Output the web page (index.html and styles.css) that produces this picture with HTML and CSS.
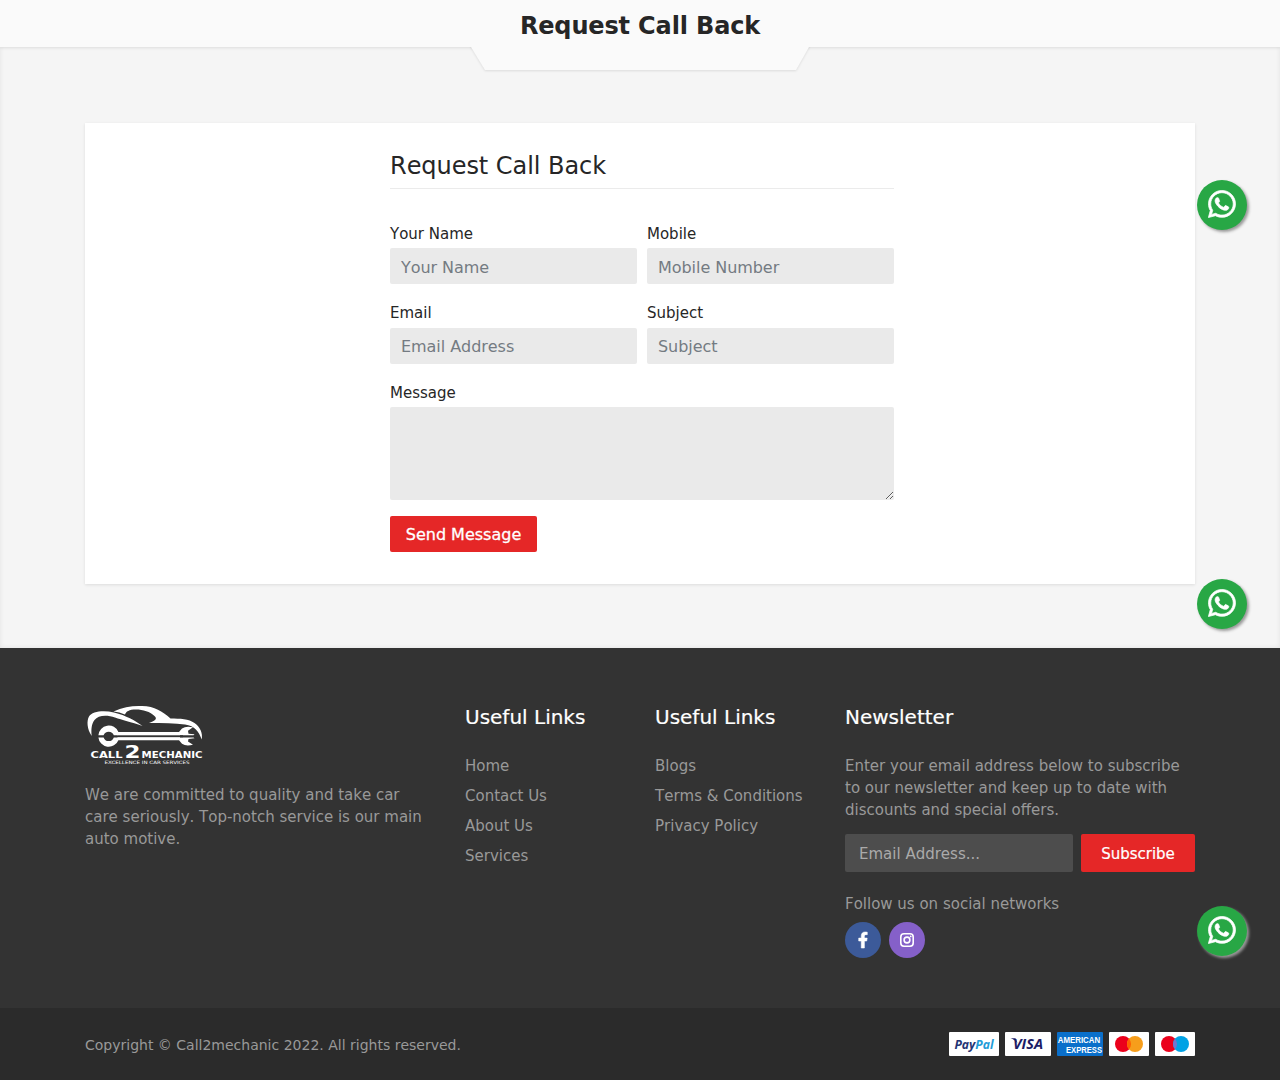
FILE: index.html
```html
<!DOCTYPE html>
<html lang="en">
<head>
<meta charset="utf-8">
<title>Request Call Back</title>
<link rel="stylesheet" href="styles.css">
</head>
<body>
<svg class="sprite" aria-hidden="true">
  <symbol id="whatsapp" viewBox="-5 25 460 462"><path d="M380.9 97.1C339 55.1 283.2 32 223.9 32c-122.4 0-222 99.6-222 222 0 39.1 10.2 77.3 29.6 111L0 480l117.7-30.9c32.4 17.7 68.9 27 106.1 27h.1c122.3 0 224.1-99.6 224.1-222 0-59.3-25.2-115-67.1-157zm-157 341.6c-33.2 0-65.7-8.9-94-25.7l-6.7-4-69.8 18.3L72 359.2l-4.4-7c-18.5-29.4-28.2-63.3-28.2-98.2 0-101.7 82.8-184.5 184.6-184.5 49.3 0 95.6 19.2 130.4 54.1 34.8 34.9 56.2 81.2 56.1 130.5 0 101.8-84.9 184.6-186.6 184.6zm101.2-138.2c-5.5-2.8-32.8-16.2-37.9-18-5.1-1.9-8.8-2.8-12.5 2.8-3.7 5.6-14.3 18-17.6 21.8-3.2 3.7-6.5 4.2-12 1.4-32.6-16.3-54-29.1-75.500-66-5.700-9.800 5.700-9.100 16.300-30.300 1.800-3.700.9-6.900-.5-9.700-1.400-2.800-12.500-30.100-17.100-41.200-4.500-10.800-9.100-9.300-12.500-9.500-3.200-.2-6.900-.2-10.600-.2-3.700 0-9.700 1.400-14.800 6.900-5.100 5.600-19.400 19-19.400 46.300 0 27.300 19.900 53.700 22.600 57.400 2.800 3.700 39.100 59.700 94.800 83.800 35.200 15.200 49 16.500 66.600 13.900 10.700-1.600 32.800-13.400 37.400-26.400 4.600-13 4.600-24.100 3.200-26.400-1.300-2.500-5-3.900-10.500-6.600z"/></symbol>
</svg>

<section class="request">
  <header class="page-title">
    <svg class="title-tab" width="350" height="35" viewBox="0 0 350 35" aria-hidden="true"><path d="M6 0h338v5l-13 23H20L6 5z"/></svg>
    <h1>Request Call Back</h1>
  </header>
  <main class="card">
    <form class="form">
      <h2>Request Call Back</h2>
      <div class="fields">
        <label>Your Name<input type="text" placeholder="Your Name"></label>
        <label>Mobile<input type="text" placeholder="Mobile Number"></label>
        <label>Email<input type="email" placeholder="Email Address"></label>
        <label>Subject<input type="text" placeholder="Subject"></label>
        <label class="wide">Message<textarea></textarea></label>
      </div>
      <button class="send" type="button">Send Message</button>
    </form>
  </main>
</section>

<footer>
  <div class="footer-main">
    <div class="about">
      <svg class="logo" width="120" height="62" viewBox="0 0 120 62" role="img" aria-label="Call 2 Mechanic">
        <g fill="#fff">
          <path d="M6.700 32C2 25 1.500 17 4 12.500C7 7.500 18 6 29 8.500C41 11.500 50 16.500 57.500 22C46 18 37 16 30 13.500C22 10.500 13 11 9.500 16C6.500 20 6 25 6.700 32z"/>
          <path d="M28.500 7.500C38 3 48 1.500 57 2C70 2.500 77 7 85.500 14.500C95 14.500 104 15 109.500 19C115 23 118 29 116.700 35.500C113.500 27 110 22 100 20.500C90 19 78 19 64 19C69.500 17 72.500 15 70 12.500C65 7.500 58 5.500 51 5.500C44 5.500 41 7.500 40 10.500C36 8.800 33 8 28.500 7.500z"/>
          <path d="M13.400 31.200a10.400 10.400 0 0 1 20-3.200H94l3-3.500q4-3 11-1.200l-5 3.500 .5 3 6 .5-1 1H28.800a5.400 5.400 0 0 0-10.200 0z"/>
          <path d="M13.400 33.400a10.400 10.400 0 0 0 20 2.800H94l3 3.500q4 3 11 1l-5-3.200.5-2.500 6-.8-1-.8H28.800a5.400 5.400 0 0 1-10.200 0z"/>
          <path d="M33 31.200H98v2H33z" fill="#333"/>
          <path d="M32.500 30.300H95v.9H32.500zM32.500 33.200H95v.9H32.500z"/>
        </g>
        <g class="logo-name">
          <text x="5.500" y="53.500" textLength="32" lengthAdjust="spacingAndGlyphs">CALL</text>
          <text class="logo-two" x="39.500" y="53.500" textLength="16" lengthAdjust="spacingAndGlyphs">2</text>
          <text x="56.500" y="53.500" textLength="61" lengthAdjust="spacingAndGlyphs">MECHANIC</text>
          <text class="logo-motto" x="19.500" y="60" textLength="85" lengthAdjust="spacingAndGlyphs">EXCELLENCE IN CAR SERVICES</text>
        </g>
      </svg>
      <p>We are committed to quality and take car<br>care seriously. Top-notch service is our main<br>auto motive.</p>
    </div>
    <nav>
      <h3>Useful Links</h3>
      <ul><li>Home</li><li>Contact Us</li><li>About Us</li><li>Services</li></ul>
    </nav>
    <nav>
      <h3>Useful Links</h3>
      <ul><li>Blogs</li><li>Terms &amp; Conditions</li><li>Privacy Policy</li></ul>
    </nav>
    <div class="newsletter">
      <h3>Newsletter</h3>
      <p>Enter your email address below to subscribe<br>to our newsletter and keep up to date with<br>discounts and special offers.</p>
      <form class="subscribe"><input type="email" placeholder="Email Address..."><button type="button">Subscribe</button></form>
      <p>Follow us on social networks</p>
      <div class="social">
        <a class="facebook"><svg width="10" height="16" viewBox="0 0 320 512"><path d="M279.140 288l14.220-92.660h-88.910v-60.130c0-25.350 12.420-50.060 52.240-50.060h40.420V6.260S260.430 0 225.360 0c-73.220 0-121.080 44.380-121.080 124.720v70.620H22.890V288h81.390v224h100.170V288z"/></svg></a>
        <a class="instagram"><svg width="14" height="14" viewBox="0 0 14 14"><rect x=".8" y=".8" width="12.400" height="12.400" rx="3.200"/><circle cx="7" cy="7" r="2.900"/><circle class="dot" cx="10.700" cy="3.400" r=".9"/></svg></a>
      </div>
    </div>
  </div>
  <div class="footer-bottom">
    <div class="bottom-inner">
      <span>Copyright © Call2mechanic 2022. All rights reserved.</span>
      <div class="payments">
        <svg width="50" height="24"><rect width="50" height="24" rx="1" fill="#fff"/><text class="paypal" x="5.500" y="16.500" textLength="39" lengthAdjust="spacingAndGlyphs"><tspan fill="#243474">Pay</tspan><tspan fill="#219bd7">Pal</tspan></text></svg>
        <svg width="46" height="24"><rect width="46" height="24" rx="1" fill="#fff"/><text class="visa" x="8" y="17.200" textLength="30" lengthAdjust="spacingAndGlyphs">VISA</text><path d="M5.500 6.200h5l2 5c-2-2.500-4-4-7-5z" fill="#1c1c66"/></svg>
        <svg width="46" height="24"><rect width="46" height="24" rx="1" fill="#0a6fca"/><g class="amex"><text x=".7" y="11" textLength="42.500" lengthAdjust="spacingAndGlyphs">AMERICAN</text><text x="9" y="20.500" textLength="36" lengthAdjust="spacingAndGlyphs">EXPRESS</text></g></svg>
        <svg width="40" height="24"><rect width="40" height="24" rx="1" fill="#fff"/><circle cx="14" cy="12" r="8" fill="#eb001b"/><circle cx="26" cy="12" r="8" fill="#f79e1b"/><path d="M20 6.700a8 8 0 0 1 0 10.600a8 8 0 0 1 0-10.600z" fill="#ff5f00"/></svg>
        <svg width="40" height="24"><rect width="40" height="24" rx="1" fill="#fff"/><circle cx="14" cy="12" r="8" fill="#eb001b"/><circle cx="26" cy="12" r="8" fill="#00a2e5"/><path d="M20 6.700a8 8 0 0 1 0 10.600a8 8 0 0 1 0-10.600z" fill="#7375cf"/></svg>
      </div>
    </div>
  </div>
</footer>

<a class="whatsapp first"><svg width="28" height="28"><use href="#whatsapp"/></svg></a>
<a class="whatsapp second"><svg width="28" height="28"><use href="#whatsapp"/></svg></a>
<a class="whatsapp third"><svg width="28" height="28"><use href="#whatsapp"/></svg></a>
</body>
</html>
```
FILE: styles.css
```css
* { box-sizing: border-box; }
body { position: relative; margin: 0; height: 1080px; overflow: hidden; background: #333; color: #262626; font: 15px/22px "DejaVu Sans", Verdana, sans-serif; font-kerning: none; }
h1, h2, h3, p, ul { margin: 0; padding: 0; }
svg { display: block; flex: none; }
.sprite { display: none; }
input, textarea, button { font: inherit; font-kerning: none; letter-spacing: inherit; border: 0; border-radius: 2px; outline: 0; }

.request { height: 648px; background: #f5f5f5; box-shadow: inset 0 0 5px rgba(0,0,0,.08); }
.page-title { position: relative; height: 47px; background: #fafafa; box-shadow: 0 1px 3px rgba(0,0,0,.1); }
.title-tab { position: absolute; left: 465px; top: 42px; fill: #fafafa; filter: drop-shadow(0 1px 1px rgba(0,0,0,.1)); clip-path: inset(5px 0 0 0); }
h1 { position: relative; padding-top: 10px; text-align: center; font-size: 24px; line-height: 32px; font-weight: 700; letter-spacing: -.15px; }
.card { width: 1110px; height: 461px; margin: 76px auto 0; padding: 26px 301px 0 305px; background: #fff; box-shadow: 0 1px 3px rgba(0,0,0,.1); }
h2 { height: 40px; padding-top: 1px; border-bottom: 1px solid #ebebeb; font-size: 24px; line-height: 32px; font-weight: 400; letter-spacing: -.05px; }
.fields { display: grid; grid-template-columns: 247px 247px; column-gap: 10px; row-gap: 17.400px; padding-top: 34px; }
.fields label { display: block; height: 62px; }
.fields input { display: block; width: 100%; height: 36px; margin-top: 3.200px; padding: 2px 11px 0; background: #eaeaea; font-size: 16px; letter-spacing: -.05px; }
.fields input::placeholder { color: #747b82; opacity: 1; }
.fields .wide { grid-column: 1 / -1; height: 118px; }
textarea { display: block; width: 100%; height: 93px; margin-top: 3.200px; background: #eaeaea; resize: vertical; }
.send { display: block; width: 147px; height: 36px; margin-top: 16.200px; padding: 2px 0 0; background: #e52727; color: #fff; font-size: 16px; -webkit-text-stroke: .3px #fff; }

footer { height: 432px; color: #999; }
.footer-main { display: grid; grid-template-columns: 380px 190px 190px 350px; width: 1110px; height: 360px; margin: 0 auto; padding-top: 56px; }
.logo { margin-bottom: 18px; }
.logo-name { fill: #fff; font: bold 9.500px "DejaVu Sans", sans-serif; }
.logo-two { font-size: 17.500px; }
.logo-motto { font-size: 4.500px; font-weight: 400; }
h3 { color: #fff; font-size: 20px; line-height: 26px; font-weight: 400; -webkit-text-stroke: .2px #fff; }
ul { list-style: none; padding-top: 21px; line-height: 30px; }
.newsletter > h3 + p { padding-top: 25px; }
.subscribe { display: flex; gap: 8px; margin: 13px 0 21px; }
.subscribe input { width: 228px; height: 38px; padding: 1px 14px 0; background: #4d4d4d; }
.subscribe input::placeholder { color: #aaa; opacity: 1; }
.subscribe button { width: 114px; height: 38px; padding: 1px 0 0; background: #e52727; color: #fff; -webkit-text-stroke: .2px #fff; }
.social { display: flex; gap: 8px; margin-top: 7px; }
.social a { display: flex; width: 36px; height: 36px; align-items: center; justify-content: center; border-radius: 50%; fill: #fff; }
.facebook { background: #3c5a99; }
.facebook svg { overflow: visible; stroke: #fff; stroke-width: 18px; }
.instagram { background: #8560c9; }
.instagram svg { fill: none; stroke: #fff; stroke-width: 1.600px; }
.instagram .dot { fill: #fff; stroke: none; }
.footer-bottom { height: 72px; background: #2b2b2b; font-size: 14px; }
.bottom-inner { display: flex; width: 1110px; height: 72px; margin: 0 auto; align-items: center; justify-content: space-between; }
.bottom-inner span { padding-top: 1px; }
.payments { display: flex; gap: 6px; }
.paypal { font: italic bold 11.500px "Open Sans", sans-serif; }
.visa { font: italic bold 15px "Open Sans", sans-serif; fill: #1c1c66; }
.amex { font: bold 8.200px "Liberation Sans", sans-serif; fill: #fff; }

.whatsapp { position: absolute; left: 1197px; display: flex; width: 50px; height: 50px; align-items: center; justify-content: center; padding-bottom: 2px; border-radius: 50%; background: #28a745; fill: #fff; stroke: #fff; stroke-width: 12px; box-shadow: 2px 2px 3px #999; }
.first { top: 180px; }
.second { top: 579px; }
.third { top: 906px; }
```
